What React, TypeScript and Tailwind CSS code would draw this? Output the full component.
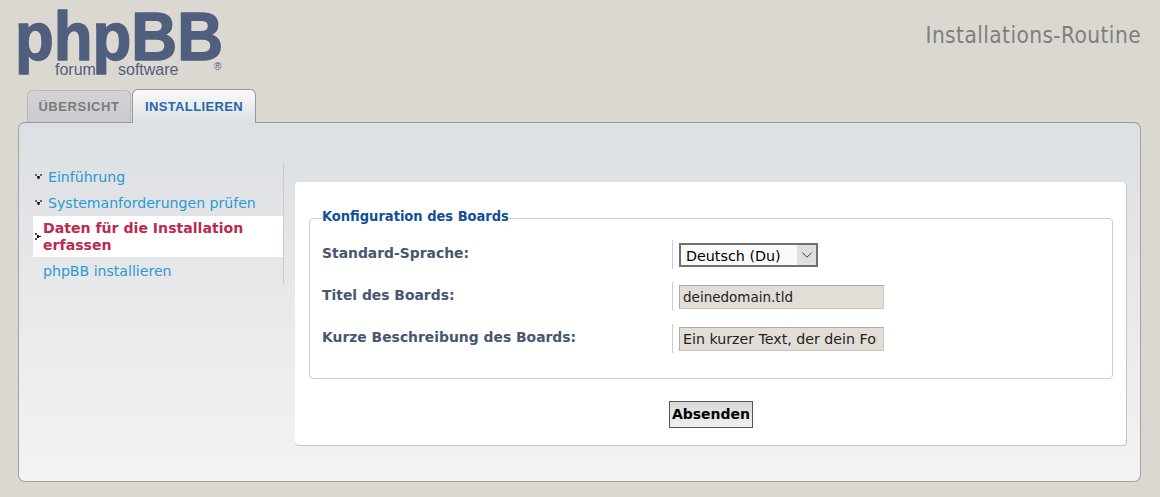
import { ChevronDown } from "lucide-react";

const VERDANA = "font-['DejaVu_Sans',sans-serif]";
const FIELD = "h-[24px] w-[205px] border border-[#c9c6b9] border-t-[#aaa] border-l-[#aaa] bg-[#e2ded7] pr-[6px] pl-[3px] text-[#222]";

function Bullet({ open = false }: { open?: boolean }) {
  if (open) {
    return (
      <svg width="7" height="7" viewBox="0 0 7 7" className="absolute left-[2px] top-[9px]">
        <path d="M0 1h2v2H0ZM5 1h2v2H5Z" fill="#666" />
        <path d="M2 3h3v1.5H4.5V6h-2V4.5H2Z" fill="#222" />
      </svg>
    );
  }
  return (
    <svg width="6" height="7" viewBox="0 0 6 7" className="absolute left-[2px] top-[17px]">
      <path d="M0 0h2v2H0ZM0 5h2v2H0Z" fill="#555" />
      <path d="M2 2h2v1h2v1H4v1H2Z" fill="#111" />
    </svg>
  );
}

function Logo() {
  return (
    <svg width="230" height="89" viewBox="0 0 230 89" className="shrink-0 fill-[#505f7d]">
      <text
        x="15"
        y="60"
        textLength="208"
        lengthAdjust="spacingAndGlyphs"
        strokeWidth="1.5"
        strokeLinejoin="round"
        className="stroke-[#505f7d] font-['Liberation_Sans',sans-serif] text-[68px] font-bold"
      >
        phpBB
      </text>
      <text x="55" y="75" className="font-['Liberation_Sans',sans-serif] text-[16px]">forum</text>
      <text x="118" y="75" className="font-['Liberation_Sans',sans-serif] text-[16px]">software</text>
      <text x="214" y="70" className="font-['Liberation_Sans',sans-serif] text-[10px]">®</text>
    </svg>
  );
}

function Row({ label, children }: { label: string; children: React.ReactNode }) {
  return (
    <div className="flex h-[42px] items-start">
      <div className="w-[350px] pt-[4px] text-[13.9px] leading-[18px] font-bold text-[#475672]">{label}</div>
      <div className="flex h-[29px] flex-1 items-center border-l border-[#ccc] pl-[6px]">{children}</div>
    </div>
  );
}

export default function App() {
  return (
    <div className={`h-[497px] w-[1160px] overflow-hidden bg-[#dbd8d1] px-[18px] ${VERDANA}`}>
      <header className="flex h-[89px] justify-between pr-[1px]">
        <div className="-ml-[18px]">
          <Logo />
        </div>
        <h1 className="pt-[20px] font-['DejaVu_Sans_Condensed','DejaVu_Sans',sans-serif] text-[22.5px] leading-[30px] tracking-[0.4px] text-[#7f7f7f]">
          Installations-Routine
        </h1>
      </header>

      <nav className="relative z-10 flex h-[34px] gap-[1px] pl-[9px] font-['Liberation_Sans',sans-serif] text-[13px] font-bold tracking-[0.35px]">
        <div className="mt-[1px] flex h-[32px] w-[104px] items-center justify-center rounded-t-[6px] border border-b-0 border-[#b9b9b9] bg-gradient-to-b from-[#d3d3d4] to-[#c9cbcf] tracking-[0.6px] text-[#7b7b7b]">
          ÜBERSICHT
        </div>
        <div className="flex h-[34px] w-[124px] items-center justify-center rounded-t-[6px] border border-b-0 border-[#999] bg-gradient-to-b from-[#fafafa] to-[#dcdfe3] text-[#2468ac]">
          INSTALLIEREN
        </div>
      </nav>

      <main className="-mt-[1px] flex h-[360px] w-[1123px] gap-[11px] rounded-[7px] border border-[#a3a3a3] border-t-[#999] bg-gradient-to-b from-[#dcdfe3] to-[#f3f3f3] pt-[40px] pr-[13px] pl-[14px]">
        <aside className="h-[121px] w-[251px] shrink-0 border-r border-[#c9cbcf] pt-[1px] text-[14.1px] leading-[16px]">
          <ul>
            <li className="relative h-[26px] pt-[5px] pl-[15px] text-[#2a9ad1]">
              <Bullet open />
              Einführung
            </li>
            <li className="relative h-[26px] pt-[5px] pl-[15px] text-[#2a9ad1]">
              <Bullet open />
              Systemanforderungen prüfen
            </li>
            <li className="relative h-[41px] bg-white pt-[4px] pl-[10px] leading-[17px] font-bold text-[#bc2a4d]">
              <Bullet />
              Daten für die Installation erfassen
            </li>
            <li className="h-[26px] pt-[6px] pl-[10px] text-[#2a9ad1]">phpBB installieren</li>
          </ul>
        </aside>

        <section className="mt-[19px] h-[264px] flex-1 rounded-[4px] border-r border-b border-[#c5c5c5] bg-white pt-[25px] pr-[13px] pl-[14px]">
          <fieldset className="h-[172px] rounded-[4px] border border-[#cccccc] px-[12px] pt-[11px]">
            <legend className="pb-[4px] font-['DejaVu_Sans_Condensed','DejaVu_Sans',sans-serif] text-[14.5px] leading-[18px] font-bold text-[#115098]">
              Konfiguration des Boards
            </legend>
            <Row label="Standard-Sprache:">
              <div className="flex h-[24px] w-[139px] items-stretch border-2 border-[#707070] bg-[#fafafa] text-[14.3px] text-black">
                <span className="flex-1 pl-[5px] leading-[22px]">Deutsch (Du)</span>
                <span className="flex w-[19px] items-center justify-center bg-[#dfdfdf]">
                  <ChevronDown size={18} strokeWidth={1.3} className="text-[#333]" />
                </span>
              </div>
            </Row>
            <Row label="Titel des Boards:">
              <input readOnly value="deinedomain.tld" className={`${FIELD} text-[13.5px]`} />
            </Row>
            <Row label="Kurze Beschreibung des Boards:">
              <input
                readOnly
                value="Ein kurzer Text, der dein Forum beschreibt."
                className={`${FIELD} text-[14.2px]`}
              />
            </Row>
          </fieldset>
          <div className="mt-[22px] flex justify-center">
            <button className="h-[27px] w-[84px] border border-[#555] bg-gradient-to-b from-[#d8d8d8] to-[#f0f0f0] text-[14px] font-bold text-black">
              Absenden
            </button>
          </div>
        </section>
      </main>
    </div>
  );
}
